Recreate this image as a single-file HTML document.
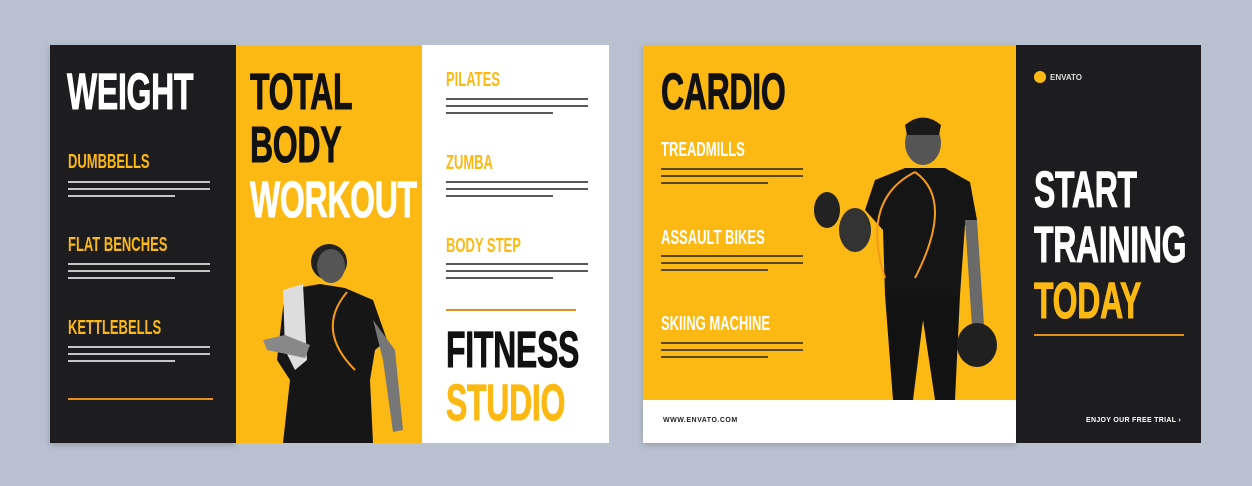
<!DOCTYPE html>
<html><head><style>
*{margin:0;padding:0;box-sizing:border-box}
body{width:1252px;height:486px;background:#b9c0cf;position:relative;overflow:hidden;font-family:"Liberation Sans Narrow","Liberation Sans",sans-serif;font-weight:bold}
.p{position:absolute}
.dark{background:#1d1d1f}
.yel{background:#fdb913}
.h{position:absolute;font-size:32px;line-height:1;letter-spacing:-0.3px;transform:scaleY(1.6);transform-origin:top left;white-space:nowrap;-webkit-text-stroke:0.6px currentColor}
.sub{position:absolute;font-size:13px;line-height:1;transform:scaleY(1.55);transform-origin:top left;white-space:nowrap}
.t{position:absolute;width:142px;font-size:5px;line-height:11px;font-family:"Liberation Sans",sans-serif}
.t i{display:block;height:2px;margin:4px 0 5px;background:currentColor;opacity:.75}
.line{position:absolute;height:2px;background:#e88d1a}
</style></head><body>
<div class="p dark" style="left:50px;top:45px;width:186px;height:398px;box-shadow:0 2px 6px rgba(0,0,0,.2)"></div>
<div class="p yel" style="left:236px;top:45px;width:186px;height:398px"></div>
<div class="p" style="left:422px;top:45px;width:187px;height:398px;background:#fff"></div>

<div class="h" style="left:67px;top:66px;color:#fff">WEIGHT</div>
<div class="sub" style="left:68px;top:151px;color:#fdb913">DUMBBELLS</div>
<div class="t" style="left:68px;top:177px;color:#fff"><i></i><i></i><i style="width:75%"></i></div>
<div class="sub" style="left:68px;top:234px;color:#fdb913">FLAT BENCHES</div>
<div class="t" style="left:68px;top:259px;color:#fff"><i></i><i></i><i style="width:75%"></i></div>
<div class="sub" style="left:68px;top:317px;color:#fdb913">KETTLEBELLS</div>
<div class="t" style="left:68px;top:342px;color:#fff"><i></i><i></i><i style="width:75%"></i></div>
<div class="line" style="left:68px;top:398px;width:145px"></div>

<div class="h" style="left:250px;top:66px;color:#111">TOTAL</div>
<div class="h" style="left:250px;top:119px;color:#111">BODY</div>
<div class="h" style="left:250px;top:174px;color:#fff">WORKOUT</div>
<svg class="p" style="left:255px;top:240px" width="160" height="203" viewBox="0 0 160 203">
<circle cx="74" cy="22" r="18" fill="#222"/>
<ellipse cx="76" cy="26" rx="14" ry="17" fill="#555"/>
<path d="M30 50 L65 44 L90 48 L118 60 L132 100 L120 110 L115 140 L118 203 L28 203 L35 140 L22 120 Z" fill="#161616"/>
<path d="M28 50 L48 44 L52 120 L40 130 L30 110 Z" fill="#ddd"/>
<path d="M118 80 L140 110 L148 190 L138 192 L128 120 Z" fill="#777"/>
<path d="M8 100 L30 95 L55 105 L50 118 L12 110 Z" fill="#888"/>
<path d="M92 52 Q60 90 100 130" stroke="#f39a1a" stroke-width="2" fill="none"/>
</svg>

<div class="sub" style="left:446px;top:69px;color:#fdb913">PILATES</div>
<div class="t" style="left:446px;top:94px;color:#222"><i></i><i></i><i style="width:75%"></i></div>
<div class="sub" style="left:446px;top:152px;color:#fdb913">ZUMBA</div>
<div class="t" style="left:446px;top:177px;color:#222"><i></i><i></i><i style="width:75%"></i></div>
<div class="sub" style="left:446px;top:235px;color:#fdb913">BODY STEP</div>
<div class="t" style="left:446px;top:259px;color:#222"><i></i><i></i><i style="width:75%"></i></div>
<div class="line" style="left:446px;top:309px;width:130px"></div>
<div class="h" style="left:446px;top:324px;color:#111">FITNESS</div>
<div class="h" style="left:446px;top:377px;color:#fdb913">STUDIO</div>

<div class="p yel" style="left:643px;top:45px;width:373px;height:398px;box-shadow:0 2px 6px rgba(0,0,0,.2)"></div>
<div class="p" style="left:643px;top:400px;width:373px;height:43px;background:#fff"></div>
<div class="p dark" style="left:1016px;top:45px;width:185px;height:398px"></div>

<div class="h" style="left:661px;top:66px;color:#111">CARDIO</div>
<div class="sub" style="left:661px;top:139px;color:#fff">TREADMILLS</div>
<div class="t" style="left:661px;top:164px;color:#222"><i></i><i></i><i style="width:75%"></i></div>
<div class="sub" style="left:661px;top:227px;color:#fff">ASSAULT BIKES</div>
<div class="t" style="left:661px;top:251px;color:#222"><i></i><i></i><i style="width:75%"></i></div>
<div class="sub" style="left:661px;top:313px;color:#fff">SKIING MACHINE</div>
<div class="t" style="left:661px;top:338px;color:#222"><i></i><i></i><i style="width:75%"></i></div>
<div class="p" style="left:663px;top:417px;font-size:7px;color:#222;font-family:'Liberation Sans',sans-serif;letter-spacing:.5px">WWW.ENVATO.COM</div>
<svg class="p" style="left:805px;top:110px" width="200" height="290" viewBox="0 0 200 290">
<ellipse cx="118" cy="33" rx="18" ry="22" fill="#555"/>
<path d="M100 15 Q118 0 136 15 L134 25 L102 25 Z" fill="#1a1a1a"/>
<path d="M70 70 L100 58 L140 58 L165 72 L172 110 L160 115 L155 185 L80 185 L78 120 L60 100 Z" fill="#151515"/>
<path d="M160 110 L172 110 L180 230 L168 232 Z" fill="#6a6a6a"/>
<path d="M80 185 L155 185 L150 290 L130 290 L118 210 L108 290 L88 290 Z" fill="#121212"/>
<ellipse cx="172" cy="235" rx="20" ry="22" fill="#202020"/>
<ellipse cx="22" cy="100" rx="13" ry="18" fill="#222"/>
<ellipse cx="50" cy="120" rx="16" ry="22" fill="#333"/>
<path d="M110 62 Q150 90 110 168 M110 62 Q55 90 80 168" stroke="#f39a1a" stroke-width="2" fill="none"/>
</svg>

<div class="p" style="left:1034px;top:71px;width:12px;height:12px;border-radius:50%;background:#fdb913"></div>
<div class="p" style="left:1050px;top:73px;font-size:8px;color:#ddd;font-family:'Liberation Sans',sans-serif">ENVATO</div>
<div class="h" style="left:1034px;top:164px;color:#fff">START</div>
<div class="h" style="left:1034px;top:219px;color:#fff">TRAINING</div>
<div class="h" style="left:1034px;top:275px;color:#fdb913">TODAY</div>
<div class="line" style="left:1034px;top:334px;width:150px"></div>
<div class="p" style="left:1086px;top:417px;font-size:7px;color:#fff;font-family:'Liberation Sans',sans-serif;letter-spacing:.3px">ENJOY OUR FREE TRIAL ›</div>
</body></html>
